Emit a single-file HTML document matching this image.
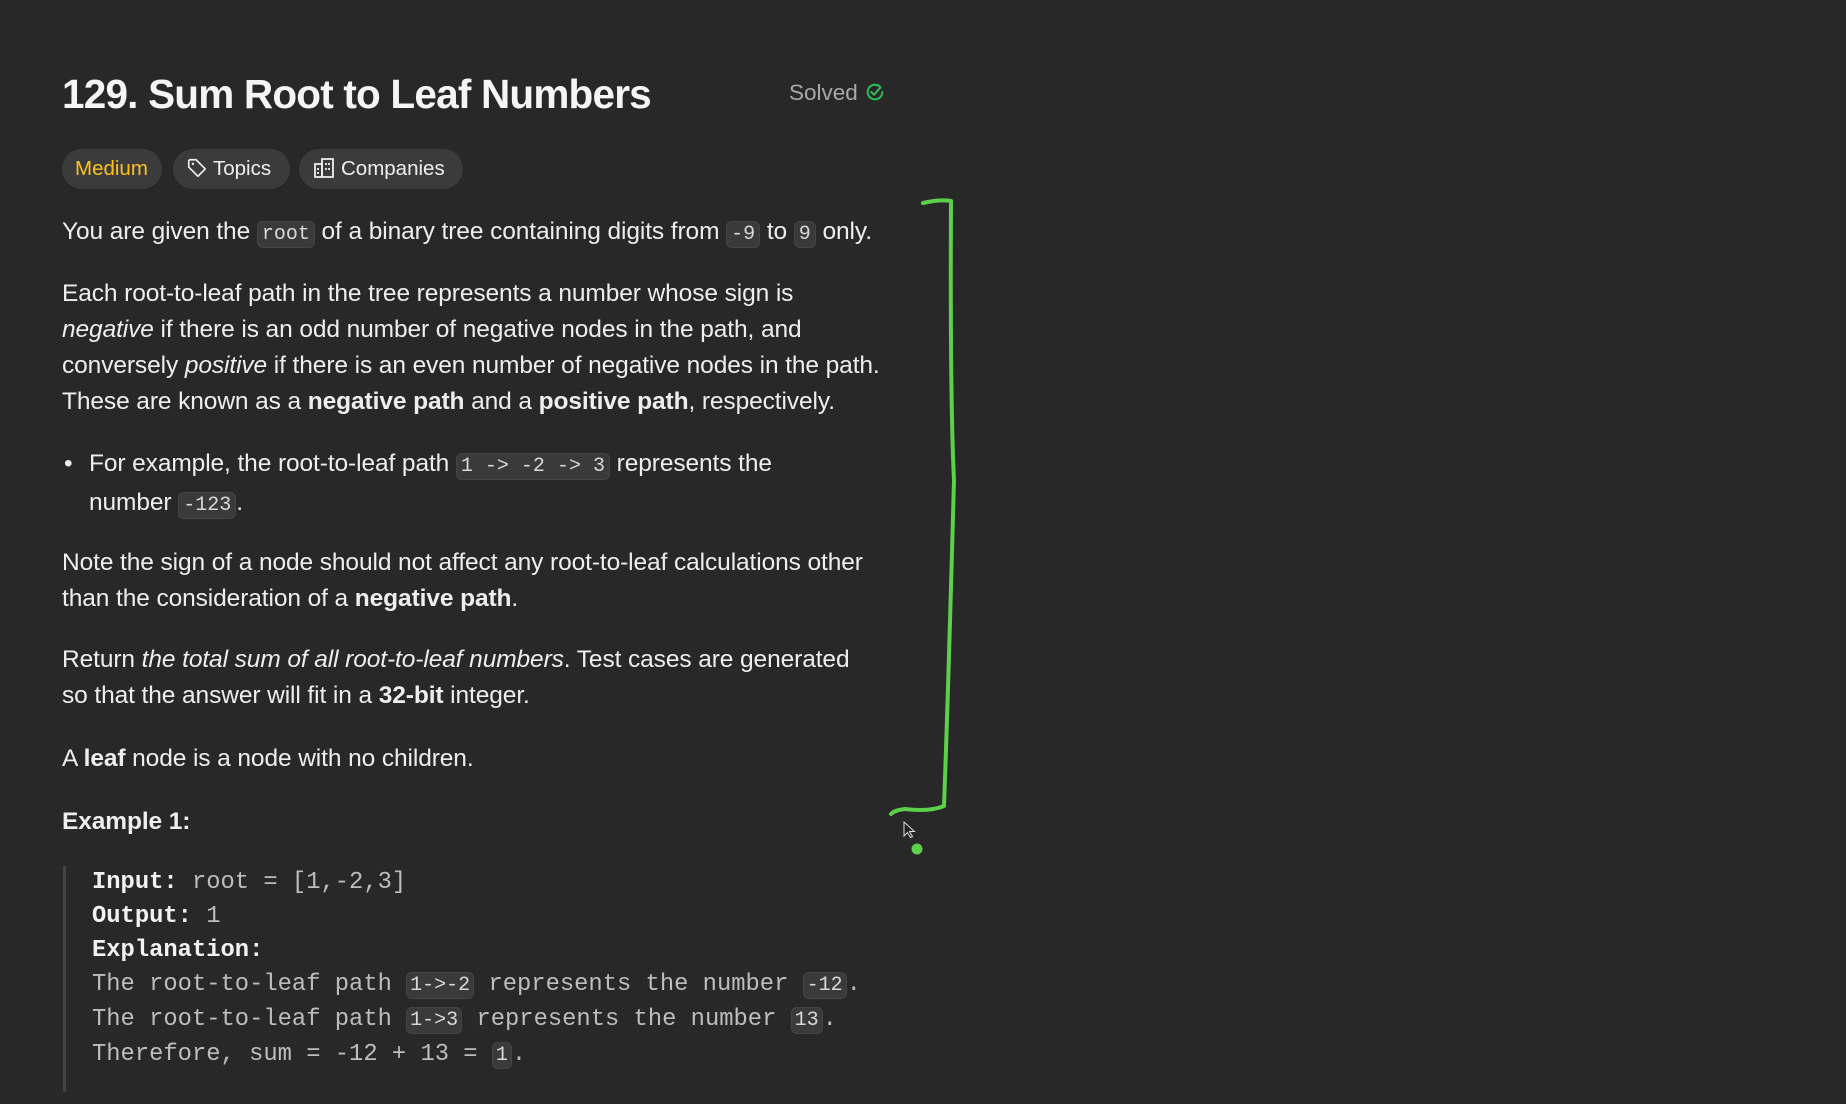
<!DOCTYPE html>
<html><head><meta charset="utf-8"><style>
body{margin:0;width:1846px;height:1104px;background:#282828;overflow:hidden;font-family:"Liberation Sans",sans-serif;color:#eeeeee;position:relative}
.a{position:absolute;white-space:nowrap}
h1{position:absolute;left:62px;top:71px;margin:0;font-size:40.5px;font-weight:bold;letter-spacing:-0.8px;color:#f5f5f5}
.solved{left:789px;top:80px;font-size:22.5px;color:#a8a8a8}
.pill{position:absolute;top:149px;height:40px;border-radius:20px;background:#3b3b3b;font-size:20.5px;line-height:40px;color:#eee;box-sizing:border-box;padding:0 13px;white-space:nowrap}
p{position:absolute;left:62px;margin:0;font-size:24.5px;line-height:36px;white-space:nowrap;letter-spacing:-0.1px}
code{font-family:"Liberation Mono",monospace;font-size:20px;background:#3a3a3a;border:1px solid #444;border-radius:6px;padding:1px 4px;color:#d8d8d8;letter-spacing:0}
.pre{position:absolute;left:92px;top:866px;font-family:"Liberation Mono",monospace;font-size:23.8px;line-height:34px;color:#bdbdbd;white-space:pre}
.pre b{color:#f2f2f2}
.pre code{font-size:20px;padding:1px 3px}
</style></head><body>
<h1>129. Sum Root to Leaf Numbers</h1>
<div class="a solved">Solved <svg width="22" height="22" viewBox="0 0 24 24" style="vertical-align:-3px"><path d="M20 12a8 8 0 1 1-3-6.2" fill="none" stroke="#2cbb5d" stroke-width="2.2" stroke-linecap="round"/><path d="M8 12l3 3 7-8" fill="none" stroke="#2cbb5d" stroke-width="2.2" stroke-linecap="round" stroke-linejoin="round"/></svg></div>
<div class="pill" style="left:62px;width:100px;color:#ffc01e">Medium</div>
<div class="pill" style="left:173px;width:117px"><svg width="22" height="22" viewBox="0 0 24 24" style="vertical-align:-4px;margin-right:5px"><path d="M3 4v7l10 10 8-8L11 3H4z" fill="none" stroke="#eee" stroke-width="1.8" stroke-linejoin="round"/><circle cx="7.5" cy="7.5" r="1.3" fill="#eee"/></svg>Topics</div>
<div class="pill" style="left:299px;width:164px"><svg width="24" height="24" viewBox="0 0 24 24" style="vertical-align:-5px;margin-right:5px"><rect x="3" y="8" width="7" height="13" fill="none" stroke="#eee" stroke-width="1.8"/><rect x="10" y="3" width="11" height="18" fill="none" stroke="#eee" stroke-width="1.8"/><path d="M14 7v2M17 7v2M14 12v2M17 12v2M6 12v2M6 16v2" stroke="#eee" stroke-width="1.8"/></svg>Companies</div>

<p style="top:214px">You are given the <code>root</code> of a binary tree containing digits from <code>-9</code> to <code>9</code> only.</p>
<p style="top:276px">Each root-to-leaf path in the tree represents a number whose sign is<br><i>negative</i> if there is an odd number of negative nodes in the path, and<br>conversely <i>positive</i> if there is an even number of negative nodes in the path.<br>These are known as a <b>negative path</b> and a <b>positive path</b>, respectively.</p>
<p style="top:446px;left:64px">•</p>
<p style="top:446px;left:89px">For example, the root-to-leaf path <code>1 -&gt; -2 -&gt; 3</code> represents the<br>number <code>-123</code>.</p>
<p style="top:545px">Note the sign of a node should not affect any root-to-leaf calculations other<br>than the consideration of a <b>negative path</b>.</p>
<p style="top:642px">Return <i>the total sum of all root-to-leaf numbers</i>. Test cases are generated<br>so that the answer will fit in a <b>32-bit</b> integer.</p>
<p style="top:741px">A <b>leaf</b> node is a node with no children.</p>
<p style="top:804px"><b>Example 1:</b></p>
<div class="a" style="left:63px;top:866px;width:3px;height:226px;background:#444"></div>
<div class="pre"><b>Input:</b> root = [1,-2,3]
<b>Output:</b> 1
<b>Explanation:</b>
The root-to-leaf path <code>1-&gt;-2</code> represents the number <code>-12</code>.
The root-to-leaf path <code>1-&gt;3</code> represents the number <code>13</code>.
Therefore, sum = -12 + 13 = <code>1</code>.</div>

<svg class="a" style="left:0;top:0" width="1846" height="1104"><path d="M923 203 Q940 199 951 201 Q950 400 954 480 Q948 700 944 806 Q930 812 905 809 Q895 810 891 814" fill="none" stroke="#5dd04a" stroke-width="4" stroke-linecap="round" stroke-linejoin="round"/><circle cx="917" cy="849" r="5.5" fill="#5dd04a"/><path d="M904 822 v14 l3.5-3.5 3 5 2-1-3-5 5 0z" fill="#222" stroke="#ddd" stroke-width="1"/></svg>
</body></html>
